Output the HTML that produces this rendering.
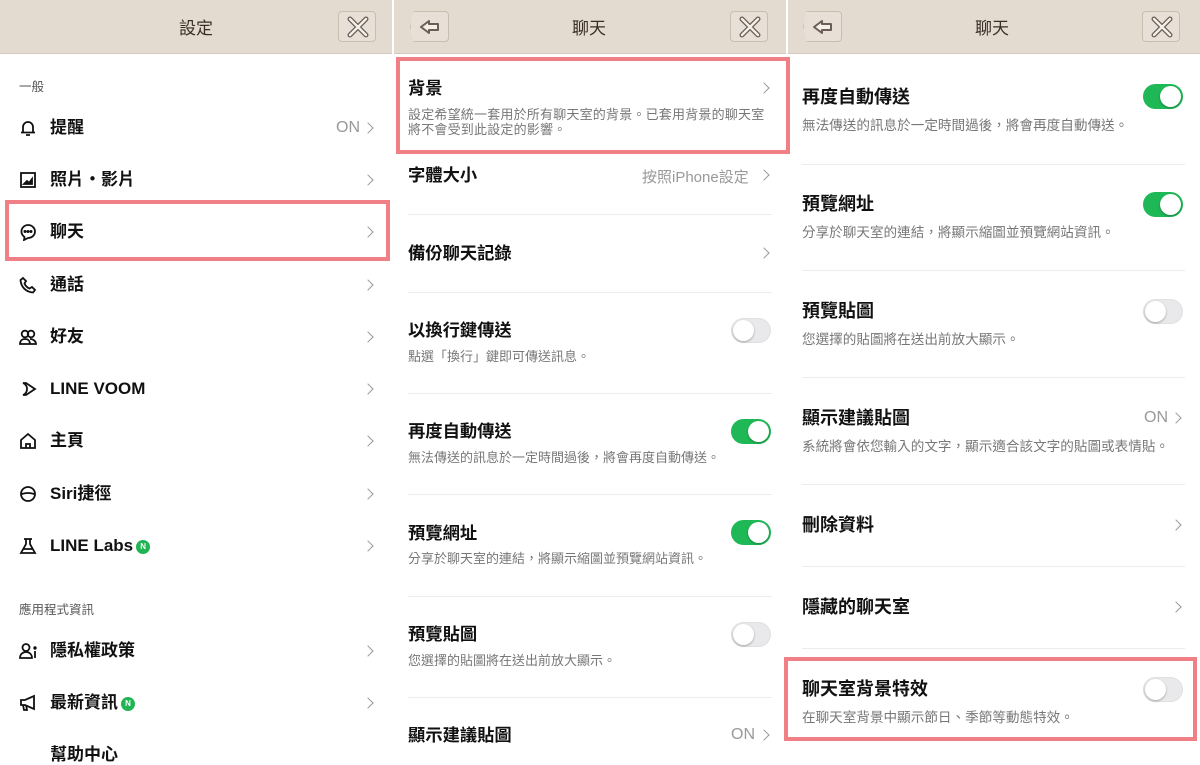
<!DOCTYPE html>
<html><head><meta charset="utf-8"><style>
*{margin:0;padding:0;box-sizing:border-box}
body{width:1200px;height:750px;overflow:hidden;background:#fff;position:relative;font-family:"Liberation Sans","Noto Sans CJK TC",sans-serif;color:#111}
.a{position:absolute;white-space:nowrap}
.hd{position:absolute;top:0;height:54px;background:#e4dbd0;border-bottom:1px solid #d3c8bb}
.ht{position:absolute;top:14px;font-size:17px;color:#3a2e26;transform:translateX(-50%)}
.btn{position:absolute;top:11px;width:38px;height:31px;border:1px solid #c9bdb0;border-radius:4px;background:#e8e0d6}
.t{font-size:17px;font-weight:bold;line-height:20px}
.p2 .t{font-size:17.3px}
.p3 .t{font-size:18px}
.d{font-size:13px;color:#777;line-height:15px}
.p3 .d{font-size:13.6px}
.s{font-size:12.5px;color:#555}
.cv{position:absolute;width:8px;height:8px;border-top:1.5px solid #999;border-right:1.5px solid #999;transform:rotate(45deg)}
.on{font-size:16px;color:#999}
.hr{position:absolute;height:1px;background:#ececec}
.tg{position:absolute;width:40px;height:25px;border-radius:13px;background:#e9e9eb;border:1px solid #e0e0e0}
.tg::after{content:"";position:absolute;top:1px;left:1px;width:21px;height:21px;border-radius:50%;background:#fff;box-shadow:0 1px 2px rgba(0,0,0,.3)}
.tg.g{background:#1fb856;border-color:#1fb856}.tg.g::after{left:16px}
.rb{position:absolute;border:4px solid #f07f86}
.ic{position:absolute;left:19px}
.nb{display:inline-block;width:14px;height:14px;border-radius:50%;background:#20b453;color:#fff;font-size:8px;text-align:center;line-height:14px;vertical-align:2px;margin-left:3px}
</style></head><body>

<!-- Panel 1 -->
<div class="hd" style="left:0;width:392px"></div>
<div class="ht" style="left:196px">設定</div>
<div class="btn" style="left:338px"><svg width="38" height="31" viewBox="0 0 38 31"><path d="M11 7l16 16M27 7L11 23" stroke="#6b5f55" stroke-width="5" stroke-linecap="round"/><path d="M11 7l16 16M27 7L11 23" stroke="#f4efe9" stroke-width="2.4" stroke-linecap="round"/></svg></div>
<div class="a s" style="left:19px;top:76px">一般</div>

<svg class="ic" style="top:119px" width="18" height="18" viewBox="0 0 18 18" fill="none" stroke="#111" stroke-width="1.8"><path d="M4 13V8a5 5 0 0110 0v5M2 13.5h14M7 16h4"/></svg>
<div class="a t" style="left:50px;top:118px">提醒</div>
<div class="a on" style="left:336px;top:119px">ON</div><div class="cv" style="left:364px;top:124px"></div>

<svg class="ic" style="top:171px" width="18" height="18" viewBox="0 0 18 18" fill="none" stroke="#111" stroke-width="1.8"><rect x="2" y="2" width="14" height="14"/><path d="M5 13l3-3 2 2 3-4v5z" fill="#111"/></svg>
<div class="a t" style="left:50px;top:170px">照片・影片</div><div class="cv" style="left:364px;top:176px"></div>

<div class="rb" style="left:5px;top:200px;width:385px;height:61px"></div>
<svg class="ic" style="top:223px" width="18" height="18" viewBox="0 0 18 18" fill="none" stroke="#111" stroke-width="1.8"><path d="M9 2a7 6.5 0 110 13l-4 2 .5-3A6.5 6.5 0 019 2z"/><circle cx="6" cy="8.5" r=".6" fill="#111"/><circle cx="9" cy="8.5" r=".6" fill="#111"/><circle cx="12" cy="8.5" r=".6" fill="#111"/></svg>
<div class="a t" style="left:50px;top:222px">聊天</div><div class="cv" style="left:364px;top:228px"></div>

<svg class="ic" style="top:276px" width="18" height="18" viewBox="0 0 18 18" fill="none" stroke="#111" stroke-width="1.8"><path d="M4 2l3 3-1.5 2.5a9 9 0 005 5L13 11l3 3-2 2.5C7 16 2 11 1.5 4z"/></svg>
<div class="a t" style="left:50px;top:275px">通話</div><div class="cv" style="left:364px;top:281px"></div>

<svg class="ic" style="top:328px" width="18" height="18" viewBox="0 0 18 18" fill="none" stroke="#111" stroke-width="1.8"><circle cx="6" cy="6" r="3.3"/><circle cx="12" cy="6" r="3.3"/><path d="M1 16c0-3 2-5 5-5s5 2 5 5zM11 11c3 0 6 2 6 5h-6"/></svg>
<div class="a t" style="left:50px;top:327px">好友</div><div class="cv" style="left:364px;top:333px"></div>

<svg class="ic" style="top:380px" width="18" height="18" viewBox="0 0 18 18" fill="none" stroke="#111" stroke-width="1.8"><path d="M4 3h3l9 6-9 6H4a6 6 0 004-6 6 6 0 00-4-6z"/></svg>
<div class="a t" style="left:50px;top:379px">LINE VOOM</div><div class="cv" style="left:364px;top:385px"></div>

<svg class="ic" style="top:432px" width="18" height="18" viewBox="0 0 18 18" fill="none" stroke="#111" stroke-width="1.8"><path d="M2 8l7-6 7 6v8H2zM7 16v-4h4v4"/></svg>
<div class="a t" style="left:50px;top:431px">主頁</div><div class="cv" style="left:364px;top:437px"></div>

<svg class="ic" style="top:485px" width="18" height="18" viewBox="0 0 18 18" fill="none" stroke="#111" stroke-width="1.8"><circle cx="9" cy="9" r="7"/><path d="M2 9.5c4-2 10-2 14 0"/></svg>
<div class="a t" style="left:50px;top:484px">Siri捷徑</div><div class="cv" style="left:364px;top:490px"></div>

<svg class="ic" style="top:537px" width="18" height="18" viewBox="0 0 18 18" fill="none" stroke="#111" stroke-width="1.8"><path d="M5 2h8M7 2v5L2 16h14l-5-9V2M4.5 12h9"/></svg>
<div class="a t" style="left:50px;top:536px">LINE Labs<span class="nb">N</span></div><div class="cv" style="left:364px;top:542px"></div>

<div class="a s" style="left:19px;top:599px">應用程式資訊</div>

<svg class="ic" style="top:642px" width="20" height="18" viewBox="0 0 20 18" fill="none" stroke="#111" stroke-width="1.8"><circle cx="7" cy="5.5" r="3.5"/><path d="M1 16c0-4 3-6 6-6s6 2 6 6zM16 9v7"/><circle cx="16" cy="6" r=".8" fill="#111"/></svg>
<div class="a t" style="left:50px;top:641px">隱私權政策</div><div class="cv" style="left:364px;top:647px"></div>

<svg class="ic" style="top:694px" width="18" height="18" viewBox="0 0 18 18" fill="none" stroke="#111" stroke-width="1.8"><path d="M2 6h4l9-4v13l-9-4H2zM4 11l1 5h3l-1-5"/></svg>
<div class="a t" style="left:50px;top:693px">最新資訊<span class="nb">N</span></div><div class="cv" style="left:364px;top:699px"></div>
<div class="a t" style="left:50px;top:745px">幫助中心</div>

<!-- Panel 2 -->
<div class="p2">
<div class="hd" style="left:394px;width:392px"></div>
<div class="ht" style="left:589px">聊天</div>
<div class="btn" style="left:410px;width:39px;clip-path:polygon(10% 0,100% 0,100% 100%,10% 100%,0 50%)"><svg width="38" height="31" viewBox="0 0 38 31"><path d="M10 15l8-6v3h9v6h-9v3z" fill="#f4efe9" stroke="#6b5f55" stroke-width="2" stroke-linejoin="round"/></svg></div>
<div class="btn" style="left:730px"><svg width="38" height="31" viewBox="0 0 38 31"><path d="M11 7l16 16M27 7L11 23" stroke="#6b5f55" stroke-width="5" stroke-linecap="round"/><path d="M11 7l16 16M27 7L11 23" stroke="#f4efe9" stroke-width="2.4" stroke-linecap="round"/></svg></div>

<div class="rb" style="left:396px;top:57px;width:394px;height:97px"></div>
<div class="a t" style="left:408px;top:78px">背景</div><div class="cv" style="left:760px;top:84px"></div>
<div class="a d" style="left:408px;top:107px;letter-spacing:.2px">設定希望統一套用於所有聊天室的背景。已套用背景的聊天室<br>將不會受到此設定的影響。</div>

<div class="a t" style="left:408px;top:165px">字體大小</div>
<div class="a" style="left:642px;top:166px;font-size:15px;color:#999">按照iPhone設定</div><div class="cv" style="left:760px;top:171px"></div>
<div class="hr" style="left:408px;top:214px;width:364px"></div>
<div class="a t" style="left:408px;top:243px">備份聊天記錄</div><div class="cv" style="left:760px;top:249px"></div>
<div class="hr" style="left:408px;top:292px;width:364px"></div>
<div class="a t" style="left:408px;top:320px">以換行鍵傳送</div><div class="a d" style="left:408px;top:349px">點選「換行」鍵即可傳送訊息。</div>
<div class="tg" style="left:731px;top:318px"></div>
<div class="hr" style="left:408px;top:393px;width:364px"></div>
<div class="a t" style="left:408px;top:421px">再度自動傳送</div><div class="a d" style="left:408px;top:450px">無法傳送的訊息於一定時間過後，將會再度自動傳送。</div>
<div class="tg g" style="left:731px;top:419px"></div>
<div class="hr" style="left:408px;top:494px;width:364px"></div>
<div class="a t" style="left:408px;top:523px">預覽網址</div><div class="a d" style="left:408px;top:551px">分享於聊天室的連結，將顯示縮圖並預覽網站資訊。</div>
<div class="tg g" style="left:731px;top:520px"></div>
<div class="hr" style="left:408px;top:596px;width:364px"></div>
<div class="a t" style="left:408px;top:624px">預覽貼圖</div><div class="a d" style="left:408px;top:653px">您選擇的貼圖將在送出前放大顯示。</div>
<div class="tg" style="left:731px;top:622px"></div>
<div class="hr" style="left:408px;top:697px;width:364px"></div>
<div class="a t" style="left:408px;top:725px">顯示建議貼圖</div>
<div class="a on" style="left:731px;top:726px">ON</div><div class="cv" style="left:760px;top:731px"></div>
</div>

<!-- Panel 3 -->
<div class="p3">
<div class="hd" style="left:788px;width:412px"></div>
<div class="ht" style="left:992px">聊天</div>
<div class="btn" style="left:803px;width:39px;clip-path:polygon(10% 0,100% 0,100% 100%,10% 100%,0 50%)"><svg width="38" height="31" viewBox="0 0 38 31"><path d="M10 15l8-6v3h9v6h-9v3z" fill="#f4efe9" stroke="#6b5f55" stroke-width="2" stroke-linejoin="round"/></svg></div>
<div class="btn" style="left:1142px"><svg width="38" height="31" viewBox="0 0 38 31"><path d="M11 7l16 16M27 7L11 23" stroke="#6b5f55" stroke-width="5" stroke-linecap="round"/><path d="M11 7l16 16M27 7L11 23" stroke="#f4efe9" stroke-width="2.4" stroke-linecap="round"/></svg></div>

<div class="a t" style="left:802px;top:87px">再度自動傳送</div><div class="a d" style="left:802px;top:118px">無法傳送的訊息於一定時間過後，將會再度自動傳送。</div>
<div class="tg g" style="left:1143px;top:84px"></div>
<div class="hr" style="left:802px;top:164px;width:383px"></div>
<div class="a t" style="left:802px;top:194px">預覽網址</div><div class="a d" style="left:802px;top:225px">分享於聊天室的連結，將顯示縮圖並預覽網站資訊。</div>
<div class="tg g" style="left:1143px;top:192px"></div>
<div class="hr" style="left:802px;top:270px;width:383px"></div>
<div class="a t" style="left:802px;top:301px">預覽貼圖</div><div class="a d" style="left:802px;top:332px">您選擇的貼圖將在送出前放大顯示。</div>
<div class="tg" style="left:1143px;top:299px"></div>
<div class="hr" style="left:802px;top:377px;width:383px"></div>
<div class="a t" style="left:802px;top:408px">顯示建議貼圖</div><div class="a d" style="left:802px;top:439px">系統將會依您輸入的文字，顯示適合該文字的貼圖或表情貼。</div>
<div class="a on" style="left:1144px;top:409px">ON</div><div class="cv" style="left:1172px;top:414px"></div>
<div class="hr" style="left:802px;top:484px;width:383px"></div>
<div class="a t" style="left:802px;top:515px">刪除資料</div><div class="cv" style="left:1172px;top:521px"></div>
<div class="hr" style="left:802px;top:566px;width:383px"></div>
<div class="a t" style="left:802px;top:597px">隱藏的聊天室</div><div class="cv" style="left:1172px;top:603px"></div>
<div class="hr" style="left:802px;top:648px;width:383px"></div>
<div class="rb" style="left:784px;top:657px;width:413px;height:84px"></div>
<div class="a t" style="left:802px;top:679px">聊天室背景特效</div><div class="a d" style="left:802px;top:710px">在聊天室背景中顯示節日、季節等動態特效。</div>
<div class="tg" style="left:1143px;top:677px"></div>
</div>
</body></html>
